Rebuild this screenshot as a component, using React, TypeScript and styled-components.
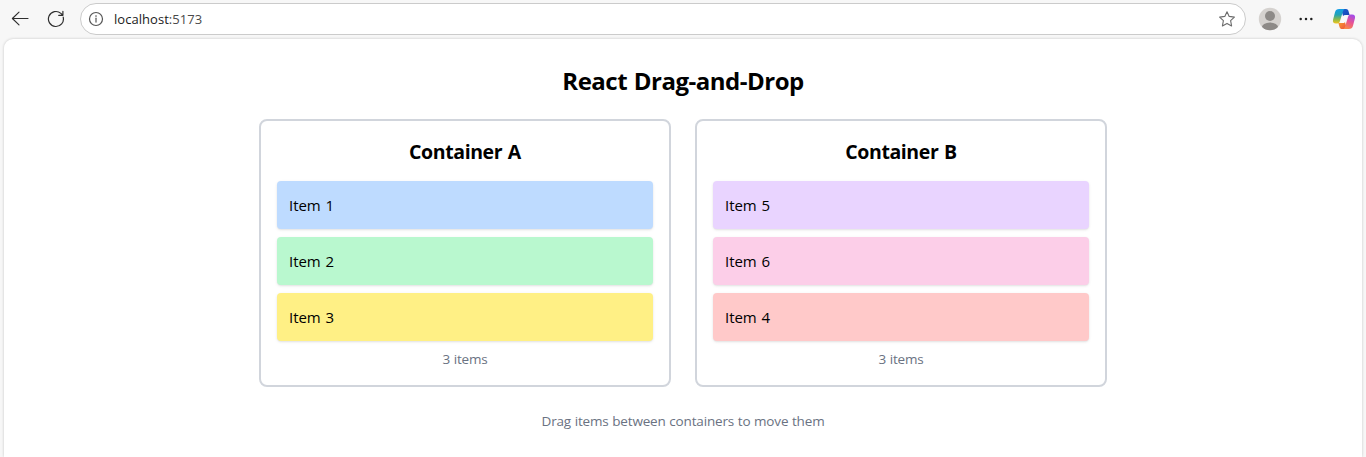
import { useState } from "react";
import styled, { createGlobalStyle } from "styled-components";

const GlobalStyle = createGlobalStyle`
  *, *::before, *::after { box-sizing: border-box; }
  html, body { margin: 0; padding: 0; }
  body {
    font-family: "Segoe UI", "Open Sans", "Noto Sans", sans-serif;
    color: #000;
    background: #f7f7f7;
    overflow: hidden;
  }
  h1, h2, p { margin: 0; }
`;

const Window = styled.div`
  display: flex;
  flex-direction: column;
  height: 457px;
  overflow: hidden;
  background: #f7f7f7;
`;

const Toolbar = styled.header`
  display: flex;
  align-items: center;
  height: 38px;
  flex: none;
  padding-left: 10px;
`;

const ToolButton = styled.button<{ $width?: number }>`
  display: flex;
  align-items: center;
  justify-content: center;
  width: ${({ $width }) => $width ?? 20}px;
  height: 28px;
  padding: 0;
  border: 0;
  flex: none;
  background: transparent;
  color: #2f2f2f;
  svg { display: block; }
`;

const NavGroup = styled.div`
  display: flex;
  gap: 16px;
  width: 70px;
  flex: none;
`;

const AddressBar = styled.div`
  display: flex;
  align-items: center;
  width: 1166px;
  height: 32px;
  padding: 0 8px 0 7px;
  border: 1px solid #cbcbcb;
  border-radius: 16px;
  background: #fff;
`;

const Address = styled.span`
  flex: 1;
  padding-left: 10px;
  font-size: 13px;
  line-height: 18px;
  letter-spacing: 0.04px;
  color: #1b1b1b;
  span { color: #4a4a4a; }
`;

const ActionGroup = styled.div`
  display: flex;
  align-items: center;
  padding-left: 12px;
  gap: 12px;
`;

const Page = styled.main`
  flex: 1;
  margin: 1px 4px 0;
  padding: 24px 0 0;
  border-radius: 9px 9px 0 0;
  background: #fff;
  box-shadow: 0 0 3px rgba(0, 0, 0, 0.2);
`;

const Content = styled.div`
  width: 848px;
  margin: 0 auto;
`;

const Title = styled.h1`
  margin-bottom: 24px;
  padding-top: 1px;
  height: 32px;
  font-size: 24px;
  line-height: 34px;
  font-weight: 700;
  text-align: center;
  letter-spacing: -0.5px;
  word-spacing: 1px;
`;

const Columns = styled.div`
  display: flex;
  gap: 24px;
`;

const Container = styled.section`
  flex: 1;
  padding: 16px;
  border: 2px solid #d1d5dc;
  border-radius: 8px;
`;

const ContainerTitle = styled.h2`
  margin-bottom: 16px;
  height: 28px;
  font-size: 19.5px;
  line-height: 29px;
  font-weight: 700;
  text-align: center;
  letter-spacing: -0.4px;
  word-spacing: 1px;
`;

const Item = styled.div<{ $color: string }>`
  height: 48px;
  margin-bottom: 8px;
  padding: 12px;
  border-radius: 4px;
  background: ${({ $color }) => $color};
  box-shadow: 0 1px 3px rgba(0, 0, 0, 0.1), 0 1px 2px -1px rgba(0, 0, 0, 0.1);
  font-size: 15px;
  line-height: 25px;
  letter-spacing: -0.05px;
  word-spacing: 1px;
  cursor: move;
`;

const Note = styled.p`
  font-size: 13.5px;
  line-height: 20px;
  text-align: center;
  letter-spacing: -0.16px;
  word-spacing: 0.3px;
  color: #6a7282;
`;

const Hint = styled(Note)`
  margin-top: 24px;
`;

const BackIcon = () => (
  <svg width="18" height="18" viewBox="0 0 18 18" fill="none" stroke="currentColor" strokeWidth="1.15" strokeLinecap="round" strokeLinejoin="round">
    <path d="M17 8.5H1.4M8 2.2 1.4 8.5 8 14.8" />
  </svg>
);

const ReloadIcon = () => (
  <svg width="18" height="18" viewBox="0 0 18 18" fill="none" stroke="currentColor" strokeWidth="1.2" strokeLinecap="round" strokeLinejoin="round">
    <path d="M16.2 7.2a7.5 7.5 0 1 1-2.3-3.8L15.8 5.2M15.9 1.3v4h-4.2" />
  </svg>
);

const InfoIcon = () => (
  <svg width="16" height="16" viewBox="0 0 16 16" fill="none" stroke="#555" strokeWidth="1.2">
    <circle cx="8" cy="8" r="6.5" />
    <path d="M8 7.2v3.9" strokeLinecap="round" />
    <circle cx="8" cy="5.1" r=".8" fill="#555" stroke="none" />
  </svg>
);

const StarIcon = () => (
  <svg width="18" height="18" viewBox="0 0 18 18" fill="none" stroke="#6c6c6c" strokeWidth="1.1" strokeLinejoin="round">
    <path d="m9 1.7 2.2 4.7 5.2.7-3.8 3.6 1 5.2L9 13.4l-4.6 2.5 1-5.2-3.8-3.6 5.2-.7Z" />
  </svg>
);

const AvatarIcon = () => (
  <svg width="24" height="24" viewBox="0 0 24 24">
    <defs><clipPath id="avatar"><circle cx="12" cy="12" r="11.2" /></clipPath></defs>
    <g clipPath="url(#avatar)">
      <path fill="#d5d2cf" d="M0 0h24v24H0z" />
      <circle cx="12" cy="9" r="5" fill="#8d8a87" />
      <ellipse cx="12" cy="21" rx="8.3" ry="5.6" fill="#8d8a87" />
    </g>
  </svg>
);

const MoreIcon = () => (
  <svg width="16" height="4" viewBox="0 0 16 4" fill="#202020">
    <circle cx="2.7" cy="2" r="1.25" /><circle cx="8" cy="2" r="1.25" /><circle cx="13.3" cy="2" r="1.25" />
  </svg>
);

const CopilotIcon = () => (
  <svg width="24" height="22" viewBox="0 0 24 22">
    <defs>
      <linearGradient id="cool" x1="0" y1="0" x2="0" y2="1">
        <stop offset="0" stopColor="#139ee8" /><stop offset=".4" stopColor="#22a3b4" />
        <stop offset=".7" stopColor="#86b94f" /><stop offset="1" stopColor="#f5c51b" />
      </linearGradient>
      <linearGradient id="warm" x1=".7" y1="0" x2=".3" y2="1">
        <stop offset="0" stopColor="#a34bea" /><stop offset=".5" stopColor="#e95391" />
        <stop offset="1" stopColor="#fa8a46" />
      </linearGradient>
      <linearGradient id="blue" x1="0" y1="0" x2="1" y2="1">
        <stop offset="0" stopColor="#1b62d4" /><stop offset="1" stopColor="#173fae" />
      </linearGradient>
      <linearGradient id="orange" x1="0" y1="0" x2="1" y2="1">
        <stop offset="0" stopColor="#f7a52c" /><stop offset="1" stopColor="#ee4b3f" />
      </linearGradient>
    </defs>
    <path fill="url(#blue)" d="M9 1h5.1c1.2 0 1.9.7 2.3 1.8L17.6 7h-3.4c-1.6 0-2.3.8-2.8 2.2Z" />
    <path fill="url(#orange)" d="M15 21H9.9c-1.2 0-1.9-.7-2.3-1.8L6.4 15h3.4c1.6 0 2.3-.8 2.8-2.2Z" />
    <path fill="url(#cool)" d="M7.2 1h5.7c-1.2.3-1.6 1.3-2 2.5L8 13c-.5 1.7-1.1 2.5-2.7 2.5H4c-2.5 0-3.6-1.5-2.9-4L3 4.2C3.6 2.1 4.9 1 7.2 1Z" />
    <path fill="url(#warm)" d="M16.8 21h-5.7c1.2-.3 1.6-1.3 2-2.5L16 9c.5-1.7 1.1-2.5 2.7-2.5H20c2.5 0 3.6 1.5 2.9 4L21 17.8c-.6 2.1-1.9 3.2-4.2 3.2Z" />
    <path fill="#fafafa" d="M12.6 7.2h2.9c-.6.5-.9 1.2-1.1 2l-1.3 4.2c-.3 1-.9 1.6-1.9 1.6H8.5c.6-.5.9-1.2 1.1-2l1.2-4.1c.3-1.1.8-1.7 1.8-1.7Z" />
  </svg>
);

type Entry = { name: string; color: string };
type Group = { title: string; items: Entry[] };

const initialGroups: Group[] = [
  {
    title: "Container A",
    items: [
      { name: "Item 1", color: "#bedbff" },
      { name: "Item 2", color: "#b9f8cf" },
      { name: "Item 3", color: "#fff085" },
    ],
  },
  {
    title: "Container B",
    items: [
      { name: "Item 5", color: "#e9d4ff" },
      { name: "Item 6", color: "#fccee8" },
      { name: "Item 4", color: "#ffc9c9" },
    ],
  },
];

export default function App() {
  const [groups, setGroups] = useState(initialGroups);
  const [dragged, setDragged] = useState<Entry | null>(null);

  const moveTo = (title: string) => {
    if (!dragged) return;
    setGroups((current) =>
      current.map((group) => {
        const rest = group.items.filter((item) => item.name !== dragged.name);
        return { ...group, items: group.title === title ? [...rest, dragged] : rest };
      }),
    );
    setDragged(null);
  };

  return (
    <>
      <GlobalStyle />
      <Window>
        <Toolbar>
          <NavGroup>
            <ToolButton aria-label="Back"><BackIcon /></ToolButton>
            <ToolButton aria-label="Reload"><ReloadIcon /></ToolButton>
          </NavGroup>
          <AddressBar>
            <InfoIcon />
            <Address>localhost<span>:5173</span></Address>
            <ToolButton aria-label="Favourite"><StarIcon /></ToolButton>
          </AddressBar>
          <ActionGroup>
            <ToolButton $width={24} aria-label="Profile"><AvatarIcon /></ToolButton>
            <ToolButton $width={24} aria-label="More"><MoreIcon /></ToolButton>
            <ToolButton $width={28} aria-label="Copilot"><CopilotIcon /></ToolButton>
          </ActionGroup>
        </Toolbar>
        <Page>
          <Content>
            <Title>React Drag-and-Drop</Title>
            <Columns>
              {groups.map((group) => (
                <Container
                  key={group.title}
                  onDragOver={(event) => event.preventDefault()}
                  onDrop={() => moveTo(group.title)}
                >
                  <ContainerTitle>{group.title}</ContainerTitle>
                  {group.items.map((item) => (
                    <Item key={item.name} $color={item.color} draggable onDragStart={() => setDragged(item)}>
                      {item.name}
                    </Item>
                  ))}
                  <Note>{group.items.length} items</Note>
                </Container>
              ))}
            </Columns>
            <Hint>Drag items between containers to move them</Hint>
          </Content>
        </Page>
      </Window>
    </>
  );
}
